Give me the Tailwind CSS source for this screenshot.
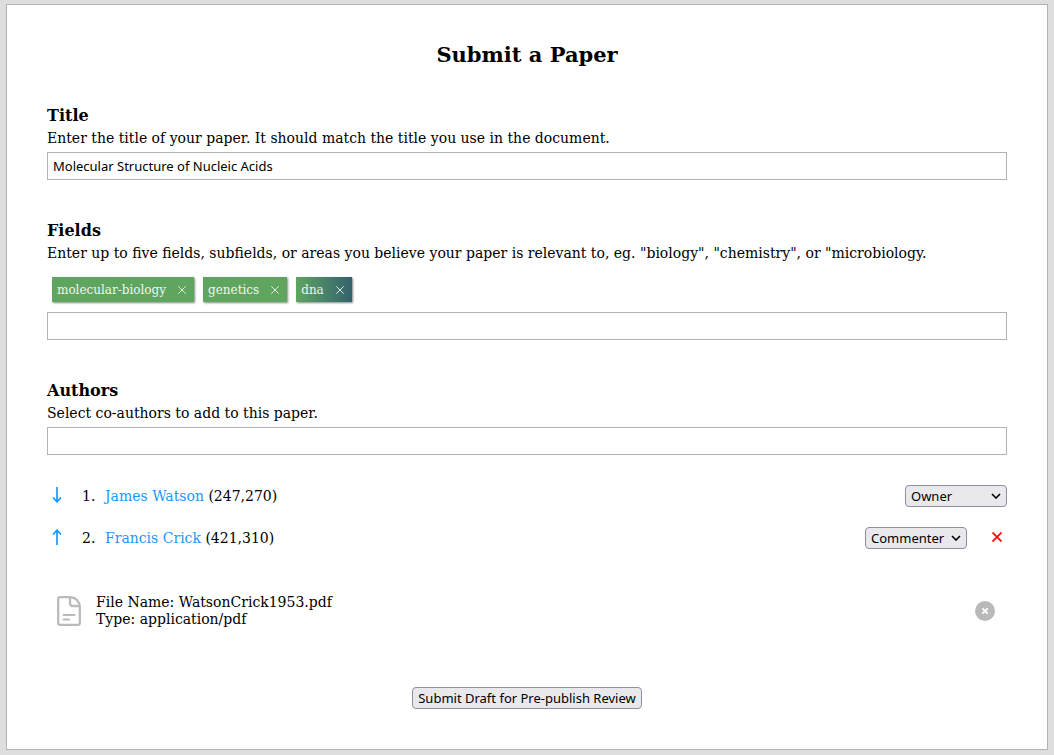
<!DOCTYPE html>
<html lang="en">
<head>
<meta charset="utf-8">
<meta name="viewport" content="width=device-width, initial-scale=1">
<title>Submit a Paper</title>
<script src="https://cdn.jsdelivr.net/npm/@tailwindcss/browser@4"></script>
</head>
<body class="min-h-screen bg-[#dedede] px-1.5 py-1 font-['DejaVu_Serif',serif] text-sm text-black">
<main class="border border-[#b3b3b3] bg-white p-10">
  <form>
    <h1 class="text-center text-[21px] leading-5 font-bold">Submit a Paper</h1>

    <section class="mt-[41px]">
      <label for="title" class="block text-base leading-5 font-bold">Title</label>
      <p class="mt-0.5 leading-5">Enter the title of your paper. It should match the title you use in the document.</p>
      <input id="title" type="text" value="Molecular Structure of Nucleic Acids" class="mt-1 block h-7 w-full border border-[#b3b3b3] bg-white px-[5px] font-['Noto_Sans',sans-serif] text-[13px]">
    </section>

    <section class="mt-[41px]">
      <label for="fields" class="block text-base leading-5 font-bold">Fields</label>
      <p class="mt-0.5 leading-5">Enter up to five fields, subfields, or areas you believe your paper is relevant to, eg. "biology", "chemistry", or "microbiology.</p>
      <ul class="mt-3.5 flex gap-[9px] px-[5px] text-xs text-white/90">
        <li class="flex h-[25px] items-center gap-3 bg-[#5fa55f] pr-2 pl-[5px] shadow-[1px_1px_2px_#888]">molecular-biology
          <button type="button" aria-label="Remove molecular-biology"><svg class="size-2" viewBox="0 0 8 8" fill="none" stroke="currentColor" stroke-width="0.9"><path d="M0.3 0.3 7.7 7.7M7.7 0.3 0.3 7.7"/></svg></button></li>
        <li class="flex h-[25px] items-center gap-3 bg-[#5fa55f] pr-2 pl-[5px] shadow-[1px_1px_2px_#888]">genetics
          <button type="button" aria-label="Remove genetics"><svg class="size-2" viewBox="0 0 8 8" fill="none" stroke="currentColor" stroke-width="0.9"><path d="M0.3 0.3 7.7 7.7M7.7 0.3 0.3 7.7"/></svg></button></li>
        <li class="flex h-[25px] items-center gap-3 bg-linear-to-r from-[#5fa55f] to-[#35626d] pr-2 pl-[5px] shadow-[1px_1px_2px_#888]">dna
          <button type="button" aria-label="Remove dna"><svg class="size-2" viewBox="0 0 8 8" fill="none" stroke="currentColor" stroke-width="0.9"><path d="M0.3 0.3 7.7 7.7M7.7 0.3 0.3 7.7"/></svg></button></li>
      </ul>
      <input id="fields" type="text" class="mt-2.5 block h-7 w-full border border-[#b3b3b3] bg-white px-[5px] font-['Noto_Sans',sans-serif] text-[13px]">
    </section>

    <section class="mt-[41px]">
      <label for="authors" class="block text-base leading-5 font-bold">Authors</label>
      <p class="mt-0.5 leading-5">Select co-authors to add to this paper.</p>
      <input id="authors" type="text" class="mt-1 block h-7 w-full border border-[#b3b3b3] bg-white px-[5px] font-['Noto_Sans',sans-serif] text-[13px]">
      <ol class="mt-5">
        <li class="flex h-[42px] items-center">
          <button type="button" aria-label="Move James Watson down" class="flex w-5 justify-center pb-0.5 text-[#1a98fc]"><svg class="h-4 w-3" viewBox="0 0 12 16" fill="none" stroke="currentColor" stroke-width="1.7"><path d="M6 0V15M2 10.500 6 14.800 10 10.500"/></svg></button>
          <span class="ml-[15px] w-[23px]">1.</span>
          <span class="flex-1"><a href="#" class="text-[#1a98fc]">James Watson</a> (247,270)</span>
          <span class="relative">
            <select aria-label="Role of James Watson" class="block h-[22px] w-[102px] appearance-none rounded-[4px] border border-[#8f8f9d] bg-[#e9e9ed] pl-[5px] font-['Noto_Sans',sans-serif] text-[13px] leading-5"><option>Owner</option><option>Commenter</option></select>
            <svg class="pointer-events-none absolute top-2 right-1.5 h-[6px] w-[10px]" viewBox="0 0 10 6" fill="none" stroke="black" stroke-width="1.6"><path d="M1 1 5 5 9 1"/></svg>
          </span>
        </li>
        <li class="flex h-[42px] items-center">
          <button type="button" aria-label="Move Francis Crick up" class="flex w-5 justify-center pb-0.5 text-[#1a98fc]"><svg class="h-4 w-3" viewBox="0 0 12 16" fill="none" stroke="currentColor" stroke-width="1.7"><path d="M6 16V1M2 5.500 6 1.200 10 5.500"/></svg></button>
          <span class="ml-[15px] w-[23px]">2.</span>
          <span class="flex-1"><a href="#" class="text-[#1a98fc]">Francis Crick</a> (421,310)</span>
          <span class="relative">
            <select aria-label="Role of Francis Crick" class="block h-[22px] w-[102px] appearance-none rounded-[4px] border border-[#8f8f9d] bg-[#e9e9ed] pl-[5px] font-['Noto_Sans',sans-serif] text-[13px] leading-5"><option>Commenter</option><option>Owner</option></select>
            <svg class="pointer-events-none absolute top-2 right-1.5 h-[6px] w-[10px]" viewBox="0 0 10 6" fill="none" stroke="black" stroke-width="1.6"><path d="M1 1 5 5 9 1"/></svg>
          </span>
          <button type="button" aria-label="Remove Francis Crick" class="flex w-10 justify-end pr-[5px] pb-0.5 text-[#f00]"><svg class="size-2.5" viewBox="0 0 10 10" fill="none" stroke="currentColor" stroke-width="1.7"><path d="M0.5 0.5 9.5 9.5M9.5 0.5 0.5 9.5"/></svg></button>
        </li>
      </ol>
    </section>

    <section class="mt-[35px] flex items-center pr-3 pl-2.5">
      <svg class="h-[30px] w-6 text-[#bbb]" viewBox="0 0 24 30" fill="none" stroke="currentColor" stroke-width="2.3" stroke-linecap="round" stroke-linejoin="round"><path d="M3 1.200H13C19 1.200 22.800 6 22.800 11V27Q22.800 28.800 21 28.800H3Q1.200 28.800 1.200 27V3Q1.200 1.200 3 1.200Z"/><path d="M13 1.500V7Q13 10 16 10H22.500"/><path d="M6.500 19H17.500M6.500 23.500H12" stroke-width="2"/></svg>
      <p class="ml-[15px] flex-1 leading-[17px]">File Name: WatsonCrick1953.pdf<br>Type: application/pdf</p>
      <button type="button" aria-label="Remove file"><svg class="size-5" viewBox="0 0 20 20"><circle cx="10" cy="10" r="10" fill="#b9b9b9"/><path d="M7.300 7.300 12.700 12.700M12.700 7.300 7.300 12.700" stroke="white" stroke-width="1.900"/></svg></button>
    </section>

    <div class="mt-[59px] flex justify-center">
      <button type="submit" class="h-[22px] rounded-[4px] border border-[#8f8f9d] bg-[#e9e9ed] px-[5px] font-['Noto_Sans',sans-serif] text-[13px] leading-5">Submit Draft for Pre-publish Review</button>
    </div>
  </form>
</main>
</body>
</html>
